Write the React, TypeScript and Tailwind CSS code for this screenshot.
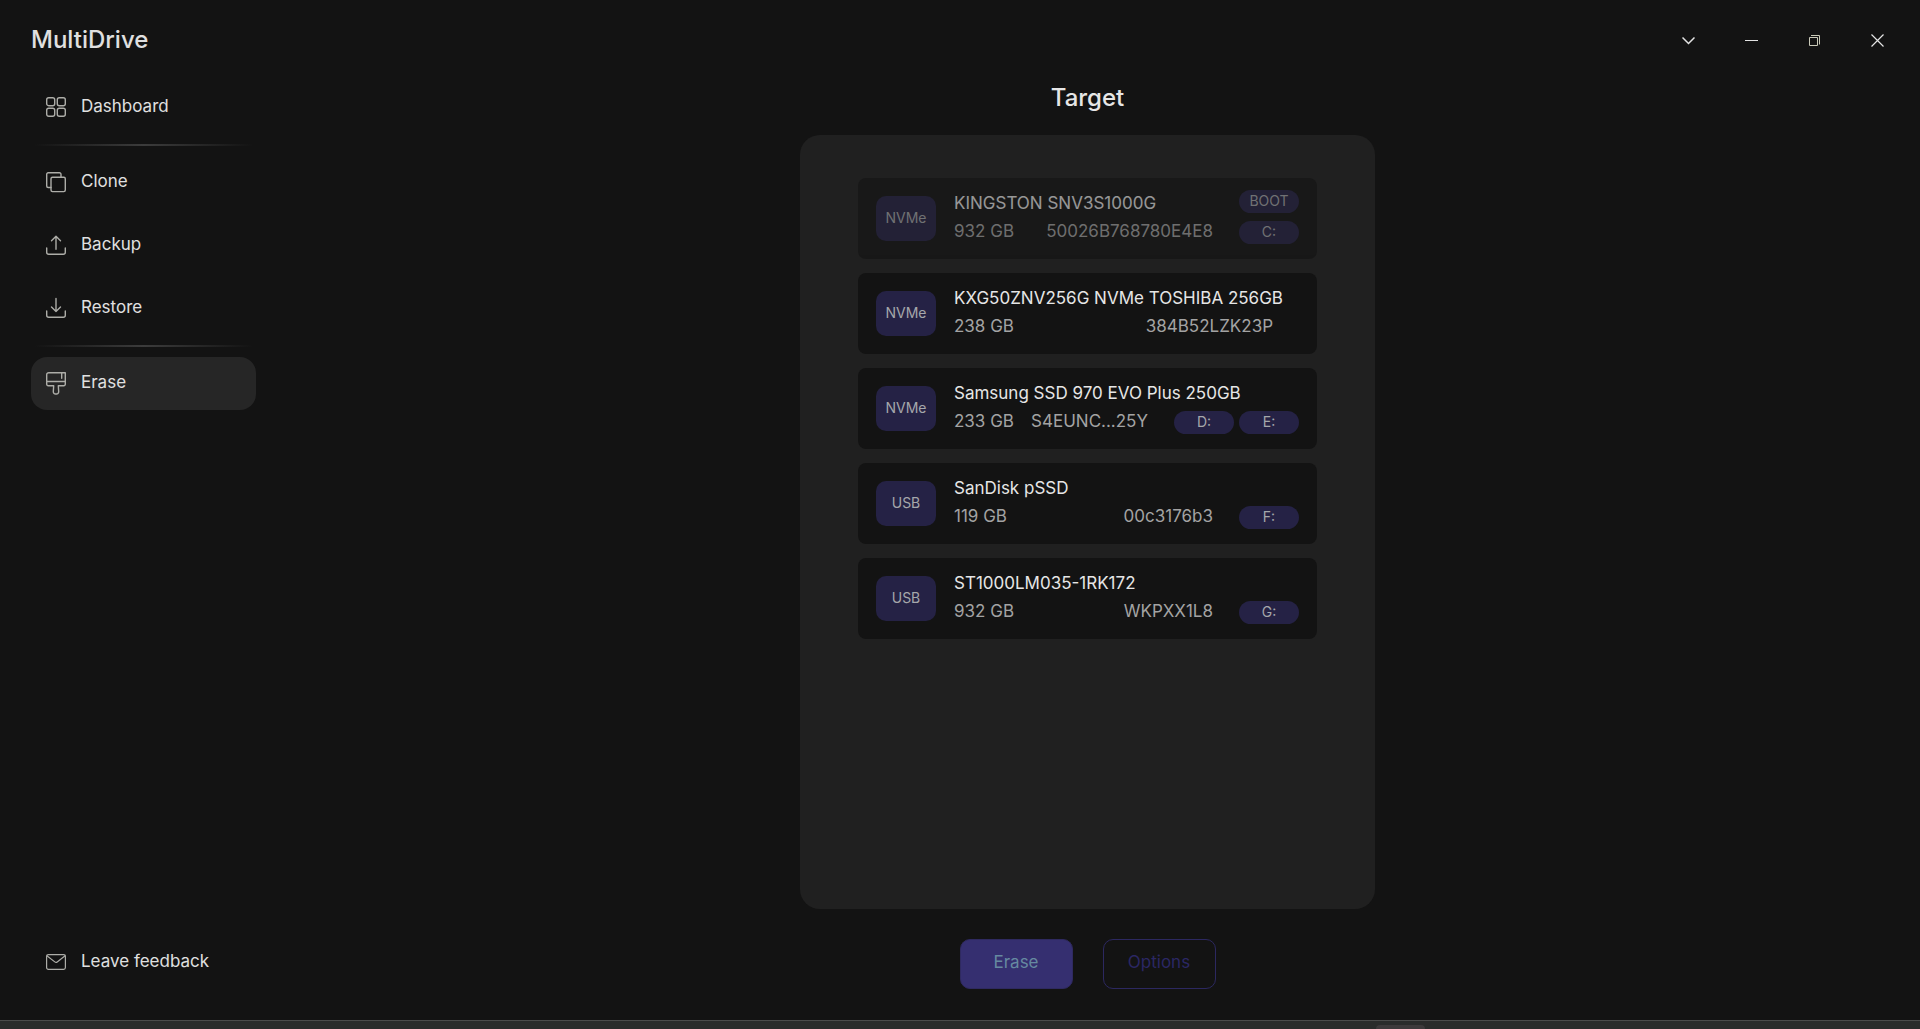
import React from 'react';
import { clsx } from 'clsx';

interface Drive {
  bus: 'NVMe' | 'USB';
  name: string;
  size: string;
  serial: string;
  letters: string[];
  isBoot?: boolean;
}

const drives: Drive[] = [
  { bus: 'NVMe', name: 'KINGSTON SNV3S1000G', size: '932 GB', serial: '50026B768780E4E8', letters: ['C:'], isBoot: true },
  { bus: 'NVMe', name: 'KXG50ZNV256G NVMe TOSHIBA 256GB', size: '238 GB', serial: '384B52LZK23P', letters: [] },
  { bus: 'NVMe', name: 'Samsung SSD 970 EVO Plus 250GB', size: '233 GB', serial: 'S4EUNC...25Y', letters: ['D:', 'E:'] },
  { bus: 'USB', name: 'SanDisk pSSD', size: '119 GB', serial: '00c3176b3', letters: ['F:'] },
  { bus: 'USB', name: 'ST1000LM035-1RK172', size: '932 GB', serial: 'WKPXX1L8', letters: ['G:'] },
];

function Icon({ children }: { children: React.ReactNode }) {
  return (
    <svg
      className="w-5 h-6 shrink-0 text-[#adada8]"
      viewBox="0 1 20 24"
      fill="none"
      stroke="currentColor"
      strokeWidth="1.4"
      strokeLinecap="round"
      strokeLinejoin="round"
      aria-hidden="true"
    >
      {children}
    </svg>
  );
}

const DashboardIcon = () => (
  <Icon>
    <rect x="0.7" y="2.7" width="8" height="8" rx="2" />
    <rect x="11.3" y="2.7" width="8" height="8" rx="2" />
    <rect x="0.7" y="13.3" width="8" height="8" rx="2" />
    <rect x="11.3" y="13.3" width="8" height="8" rx="2" />
  </Icon>
);

const CloneIcon = () => (
  <Icon>
    <path d="M5 17.5H2.2A1.5 1.5 0 0 1 .7 16V4.2A1.5 1.5 0 0 1 2.2 2.7H13.5A1.5 1.5 0 0 1 15 4.2V7.200" />
    <rect x="5" y="7.300" width="14.300" height="14.300" rx="1.500" />
  </Icon>
);

const BackupIcon = () => (
  <Icon>
    <path d="M.7 15V19.300A2 2 0 0 0 2.700 21.300H17.300A2 2 0 0 0 19.300 19.300V15" />
    <path d="M10 16.300V3.300M5.500 7.800 10 3.300 14.500 7.800" />
  </Icon>
);

const RestoreIcon = () => (
  <Icon>
    <path d="M.7 15V19.300A2 2 0 0 0 2.700 21.300H17.300A2 2 0 0 0 19.300 19.300V15" />
    <path d="M10 2.500V15.500M5.500 11 10 15.500 14.500 11" />
  </Icon>
);

const EraseIcon = () => (
  <Icon>
    <path d="M2.700 1.700H19.300V13.200A1.500 1.500 0 0 1 17.800 14.700H12.300L12.700 20.500A2.300 2.300 0 0 1 10 23 2.300 2.300 0 0 1 7.300 20.500L7.700 14.700H2.200A1.500 1.500 0 0 1 .7 13.200V3.700A2 2 0 0 1 2.700 1.700Z" />
    <path d="M.7 10.500H19.300M15.700 1.700V7.300" />
  </Icon>
);

const MailIcon = () => (
  <Icon>
    <rect x="0.600" y="4.600" width="18.800" height="14.800" rx="1.800" strokeWidth="1.200" />
    <path d="M.9 5.800 8.800 11.900A2 2 0 0 0 11.200 11.900L19.100 5.800" strokeWidth="1.200" />
  </Icon>
);

function NavItem({ icon, label, active }: { icon: React.ReactNode; label: string; active?: boolean }) {
  return (
    <button
      className={clsx(
        'flex items-center gap-[15px] w-full h-[53px] px-[15px] rounded-2xl text-left cursor-pointer',
        active ? 'bg-[#262626]' : 'hover:bg-[#1c1c1c]'
      )}
    >
      {icon}
      <span className="pb-px">{label}</span>
    </button>
  );
}

function Divider() {
  return <div className="h-0.5 mx-[3px] bg-linear-to-r from-transparent via-[#3c3c3c] to-transparent" />;
}

function WindowButton({ label, children }: { label: string; children: React.ReactNode }) {
  return (
    <button aria-label={label} className="flex items-center justify-center w-[63px] h-10 cursor-pointer">
      <svg className="w-[13px] h-[13px] text-[#e4e4e4]" viewBox="0 0 13 13" fill="none" stroke="currentColor" aria-hidden="true">
        {children}
      </svg>
    </button>
  );
}

function Pill({ children }: { children: React.ReactNode }) {
  return (
    <span className="w-[60px] h-[23px] shrink-0 rounded-full bg-[#252245] text-[#a5a7ab] text-sm leading-[22px] text-center">
      {children}
    </span>
  );
}

function DriveCard({ drive }: { drive: Drive }) {
  const isShortened = drive.serial.includes('...');
  return (
    <button
      disabled={drive.isBoot}
      className="flex items-center w-full h-[81px] px-[18px] gap-[18px] rounded-lg bg-[#131313] text-left cursor-pointer disabled:opacity-60 disabled:cursor-default"
    >
      <span className="flex items-center justify-center w-[60px] h-[45px] shrink-0 rounded-[10px] bg-[#252245] text-[#a5a7ab] text-sm pb-0.5">
        {drive.bus}
      </span>
      <span className="flex flex-col flex-1 min-w-0 pb-[3px]">
        <span className="flex items-start h-[27px] leading-[27px]">
          <span className="flex-1 whitespace-nowrap text-[#e6e6e6]">{drive.name}</span>
          {drive.isBoot && <Pill>BOOT</Pill>}
        </span>
        <span className="flex items-end h-[27px] leading-[25px] text-[#a3a3a3]">
          <span className="w-[82px] whitespace-nowrap">{drive.size}</span>
          <span className={clsx('flex-1 pr-[26px] whitespace-nowrap', isShortened ? 'text-left' : 'text-right')}>
            {drive.serial}
          </span>
          <span className="flex gap-[5px]">
            {drive.letters.map((letter) => (
              <Pill key={letter}>{letter}</Pill>
            ))}
          </span>
        </span>
      </span>
    </button>
  );
}

export default function App() {
  return (
    <div className="flex flex-col min-h-screen bg-[#131313] text-[#e0e0e0] text-[17px] font-['Inter',sans-serif] select-none">
      <div className="flex flex-1">
        {/* Sidebar */}
        <aside className="flex flex-col w-64 shrink-0 pl-[31px] pb-[31px]">
          <h1 className="flex items-center h-[81px] pb-0.5 text-2xl font-medium">MultiDrive</h1>
          <nav className="flex flex-col flex-1 gap-2.5">
            <NavItem icon={<DashboardIcon />} label="Dashboard" />
            <Divider />
            <NavItem icon={<CloneIcon />} label="Clone" />
            <NavItem icon={<BackupIcon />} label="Backup" />
            <NavItem icon={<RestoreIcon />} label="Restore" />
            <Divider />
            <NavItem icon={<EraseIcon />} label="Erase" active />
          </nav>
          <NavItem icon={<MailIcon />} label="Leave feedback" />
        </aside>

        {/* Main content */}
        <main className="flex flex-col flex-1 items-center pr-px pb-[31px]">
          <div className="flex items-center self-end h-[81px] pr-2.5">
            <WindowButton label="More">
              <path d="M.5 3.500 6.500 9.500 12.500 3.500" strokeWidth="1.500" />
            </WindowButton>
            <WindowButton label="Minimize">
              <path d="M0 6.500H13" />
            </WindowButton>
            <WindowButton label="Restore down">
              <path d="M1.500 3.500H9.500V11.500H1.500ZM3 1.500H11.500V10.500" className="text-[#c9c9b8]" stroke="currentColor" />
            </WindowButton>
            <WindowButton label="Close">
              <path d="M.5.5 12.500 12.500M12.500.5.5 12.500" strokeWidth="1.200" />
            </WindowButton>
          </div>

          <h2 className="mb-5 text-2xl leading-[34px] font-medium text-[#e6e6e6]">Target</h2>

          <section className="flex flex-col flex-1 w-full max-w-[575px] gap-3.5 px-[58px] pt-[43px] pb-10 rounded-[20px] bg-[#202020]">
            {drives.map((drive) => (
              <DriveCard key={drive.serial} drive={drive} />
            ))}
          </section>

          <div className="flex gap-[30px] mt-[30px]">
            <button disabled className="w-[113px] h-[50px] pb-0.5 rounded-[10px] border border-[#2f2a60] bg-[#352f70] text-[#6689a0]">
              Erase
            </button>
            <button disabled className="w-[113px] h-[50px] pb-0.5 rounded-[10px] border border-[#2c2860] text-[#2b2764]">
              Options
            </button>
          </div>
        </main>
      </div>

      {/* Taskbar edge */}
      <footer className="flex justify-end items-end h-[9px] pr-[495px] border-t border-[#4b4c4b] bg-[#2a2c2b]">
        <div className="w-[49px] h-1 rounded-t-sm bg-[#3d3a3b]" />
      </footer>
    </div>
  );
}
